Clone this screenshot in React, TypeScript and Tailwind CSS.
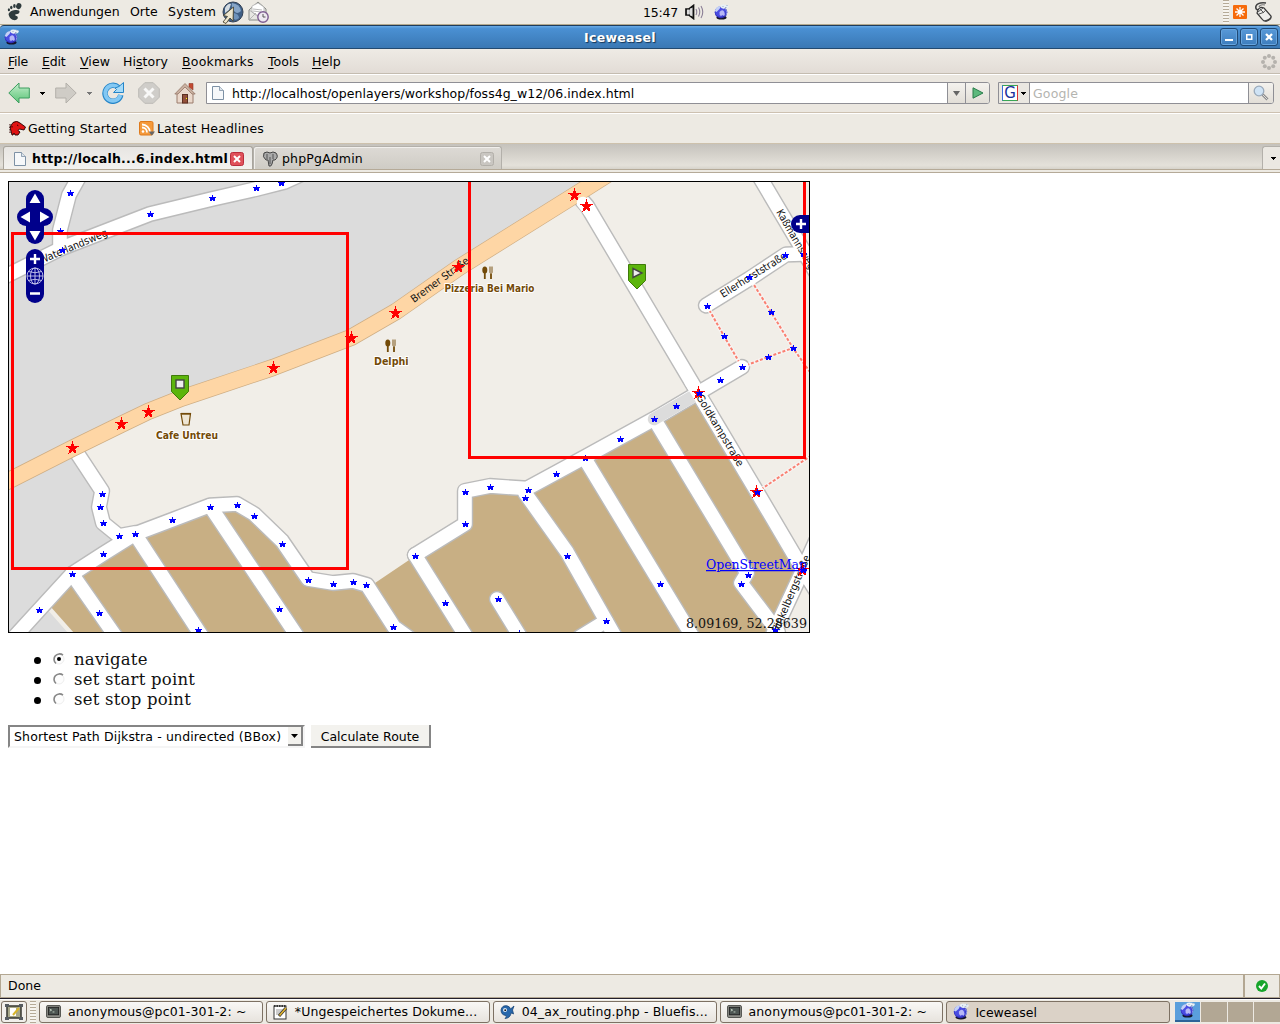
import React from "react";

type Pt = [number, number];

const SANS = "font-['DejaVu_Sans',sans-serif]";
const SERIF = "font-['DejaVu_Serif',serif]";

/* ---------- icons ---------- */

function Globe({ className }: { className: string }) {
  return (
    <svg viewBox="0 0 16 16" className={className}>
      <ellipse cx="7.500" cy="13.500" rx="5" ry="2" fill="#15152a" />
      <ellipse cx="7" cy="8.300" rx="6.300" ry="6" fill="#2f2db4" />
      <ellipse cx="6.500" cy="8" rx="5.300" ry="5" fill="#4a4ce2" />
      <path d="M.8 7Q2 2 7 2Q6 5.500 2.500 8Z" fill="#c4d1f7" />
      <path d="M5.500 8Q8 5 10 7.500Q11.500 11 10 12L8.500 11L7 12Q5 11 5.500 8Z" fill="#b7b8f6" />
      <path d="M11.500 5Q14 8 12 11.500" fill="none" stroke="#9aa8f2" strokeWidth=".8" />
      <path d="M6 2Q8 0 11 .800Q15 .500 14.800 3Q13.500 5 10.500 4.500Q7.500 5.500 6 2Z" fill="#e8f0f6" />
      <path d="M8.500 2.500h1M12.500 1.500h1M11 3.500h1.500" stroke="#9aabc8" />
    </svg>
  );
}

function Foot() {
  return (
    <svg viewBox="0 0 16 18" className="h-[18px] w-4" fill="#2e3a3c">
      <ellipse cx="11.800" cy="3.200" rx="2.600" ry="3" transform="rotate(20 12 3)" />
      <ellipse cx="7.400" cy="3" rx="1.300" ry="2" />
      <ellipse cx="4.300" cy="4.500" rx="1.200" ry="1.700" />
      <ellipse cx="1.900" cy="6.800" rx="1.100" ry="1.500" />
      <path d="M1.500 11Q3 7.500 8 7Q13 6.500 12.500 9.200Q12 11.500 8.500 11.300Q7.500 12.500 9 12.800Q11.500 13.500 10.500 15.800Q9 18 5.500 16.800Q2 15 1.500 11Z" />
    </svg>
  );
}

function BrowserLaunch() {
  return (
    <svg viewBox="0 0 22 23" className="h-[23px] w-[22px]">
      <circle cx="11" cy="11" r="10" fill="#3f5f85" stroke="#334155" />
      <path d="M10 2Q18 3 19 10Q15 14 12 10Q9 6 10 2Z" fill="#86a5c8" />
      <path d="M3 7Q6 2 9 3L7 9L3 12Z" fill="#d3dbe2" />
      <path d="M12 12Q17 13 17 17Q14 20 12 18Z" fill="#6f93bb" />
      <path d="M11.500 6L1.500 14.500L5.500 15.500L1 21L4 22.500L8 17L11 20Z" fill="#eee7cf" stroke="#4b4632" strokeWidth=".9" />
    </svg>
  );
}

function MailLaunch() {
  return (
    <svg viewBox="0 0 22 22" className="h-[22px] w-[22px]">
      <path d="M1 9L10 1L18 8V19H1Z" fill="#e7e7e3" stroke="#888a85" />
      <path d="M4 5L10 2L16 6V12L9 15L4 11Z" fill="#fff" stroke="#aaa" strokeWidth=".7" />
      <path d="M5 8l9 1M5 10l8 1M1 19L8 12M1 9L12 16" stroke="#aaa" strokeWidth=".8" fill="none" />
      <circle cx="15" cy="16" r="5.200" fill="#eee9f1" stroke="#7d5c91" strokeWidth="1.400" />
      <path d="M15 13v3h2.500" stroke="#555" fill="none" />
    </svg>
  );
}

function Speaker() {
  return (
    <svg viewBox="0 0 20 16" className="h-4 w-5">
      <path d="M1 5H4L8.500 1.500V14.500L4 11H1Z" fill="#bbb" stroke="#111" strokeWidth="1.700" />
      <path d="M3 5.500V10.500M6 4V12" stroke="#fff" />
      <path d="M11 5Q12.500 8 11 11M13.500 3.500Q16 8 13.500 12.500M16 2Q19.500 8 16 14" fill="none" stroke="#8b7f96" strokeWidth="1.100" />
    </svg>
  );
}

function Mouse() {
  return (
    <svg viewBox="0 0 18 20" className="h-5 w-[18px]">
      <path d="M12 1Q4 0 2 4Q1 8 5 8" fill="none" stroke="#444" strokeWidth="1.600" />
      <path d="M11 3Q6 2 5 5" fill="none" stroke="#777" strokeWidth="1.200" />
      <path d="M4 8Q6 4 10 6L17 14Q18 17 13 19Q10 20 8 17L3 11Z" fill="#ededeb" stroke="#3a3a3a" strokeWidth="1.200" />
      <path d="M4 10L9 6M6 7L10 11M5 12Q10 11 12 8" stroke="#555" fill="none" />
      <path d="M10 18.500Q16 17 17 14V16Q15 19.500 11 19.500Z" fill="#444" />
    </svg>
  );
}

function PageIcon() {
  return (
    <svg viewBox="0 0 12 14" className="h-3.5 w-3">
      <path d="M.5 .5H7.500L11.500 4.500V13.500H.500Z" fill="#f6f8fa" stroke="#7d91a5" />
      <path d="M7.500 .500V4.500H11.500" fill="#dde4ea" stroke="#7d91a5" strokeWidth=".8" />
    </svg>
  );
}

function Caret({ color }: { color: "dark" | "gray" }) {
  return (
    <svg viewBox="0 0 5 3" className="h-[3px] w-[5px]" shapeRendering="crispEdges">
      <path d="M0 0H5L2.500 3Z" fill={color === "dark" ? "#000" : "#777"} />
    </svg>
  );
}

function Terminal() {
  return (
    <svg viewBox="0 0 16 14" className="h-[13px] w-[15px]">
      <rect x=".5" y=".5" width="15" height="13" rx="1.500" fill="#8d8e88" stroke="#4a4b47" />
      <rect x="2.500" y="2.500" width="11" height="8" fill="#4d5552" stroke="#222" />
      <path d="M4 4.500l2 1-2 1M7 7.500h2" stroke="#cfe0cf" fill="none" strokeWidth=".9" />
    </svg>
  );
}

/* ---------- map ---------- */

const toPath = (pts: Pt[]) => "M" + pts.map((p) => p.join(" ")).join("L");

const ROADS: Pt[][] = [
  [[0, 279], [8, 275], [62, 248], [150, 214], [212, 199], [256, 189], [284, 182], [315, 168]],
  [[60, 248], [60, 230], [69, 195], [84, 168]],
  [[77, 453], [102, 491], [99, 507], [103, 523], [119, 536], [135, 533]],
  [[8, 644], [39, 610], [72, 574], [103, 554], [135, 534], [172, 520], [210, 505.500], [237, 504], [254, 514], [282, 541], [308, 579], [333, 583], [353, 581], [367, 585], [394, 627], [412, 640]],
  [[72, 574], [116, 637]],
  [[135, 534], [203, 638]],
  [[210, 506], [279, 609], [299, 639]],
  [[415, 555], [467, 638]],
  [[415, 555], [465, 524], [465, 491], [490, 486], [527, 488.500], [585, 457], [654, 419], [698, 393], [742, 367]],
  [[525, 493], [567, 552], [617, 640]],
  [[606, 621], [580, 637]],
  [[585, 459], [694, 639]],
  [[656, 422], [747, 573], [741, 583], [778, 632]],
  [[497, 599], [521, 638]],
  [[580, 198], [587, 206], [698, 393], [757, 492], [803, 570], [818, 594]],
  [[768, 645], [801, 574], [816, 541]],
  [[755, 169], [803, 250], [818, 276]],
  [[706, 305.500], [749, 279], [786, 254.500], [815, 253.500]],
];

const HIGHWAY: Pt[] = [[0, 485], [8, 481], [72, 448.500], [121, 424.500], [148, 411.500], [182, 398], [273, 367.500], [351, 337.500], [396, 311.500], [459, 267.500], [575, 195], [620, 166.500]];

const PATHS: Pt[][] = [
  [[707, 306], [724, 336], [742, 367]],
  [[749, 277], [771, 312], [793, 348], [812, 375]],
  [[742, 367], [768, 357], [793, 348]],
  [[757, 492], [812, 455]],
];

const BLUE: Pt[] = [
  [70, 193], [60, 231], [62, 250], [150, 214], [212, 198], [256, 188], [281, 183],
  [102, 494], [100, 507], [103, 523], [119, 536], [135, 534], [103, 554], [72, 574], [39, 610], [99, 613], [198, 630],
  [172, 520], [210, 507], [237, 505], [254, 516], [282, 544], [279, 609], [308, 580], [333, 584], [353, 582], [366, 585], [393, 627],
  [415, 556], [445, 603], [465, 524], [465, 492], [490, 487], [528, 490], [525, 498], [498, 599], [519, 633],
  [556, 474], [585, 458], [620, 439], [654, 419], [676, 406], [720, 380], [742, 367],
  [567, 556], [606, 621], [660, 584], [748, 575], [741, 584], [775, 630],
  [707, 306], [724, 336], [749, 277], [785, 255], [803, 254], [771, 312], [793, 348], [768, 357],
];

const RED: Pt[] = [
  [72, 448], [121, 424], [148, 412], [273, 368], [351, 338], [395, 313], [458, 267], [574, 195], [586, 206], [698, 393], [756, 492], [802, 570],
];

const JUNCTIONS: Pt[] = [[699, 393], [757, 492], [803, 570]];

const SMALL_STAR = "M0 -3H1V-1H4V0H3V3H1V2H0V3H-2V0H-3V-1H0Z";

function starPath(cx: number, cy: number, r: number) {
  const pts: Pt[] = [];
  for (let i = 0; i < 10; i++) {
    const a = -Math.PI / 2 + (i * Math.PI) / 5;
    const d = i % 2 ? r * 0.42 : r;
    pts.push([+(cx + d * Math.cos(a)).toFixed(2), +(cy + d * Math.sin(a)).toFixed(2)]);
  }
  return toPath(pts) + "Z";
}

function Fork({ x, y }: { x: number; y: number }) {
  return (
    <g transform={`translate(${x} ${y})`}>
      <ellipse cx="2.800" cy="3.500" rx="2.500" ry="3.500" fill="#734a08" />
      <path d="M2.800 5V12.500M9 5V12.500" stroke="#734a08" strokeWidth="1.800" />
      <path d="M7 0H11V6L9 7.500L7 6Z" fill="#b5a07e" />
    </g>
  );
}

function PlaceLabel({ x, y, w, children }: { x: number; y: number; w: number; children: string }) {
  return (
    <text x={x} y={y} textLength={w} lengthAdjust="spacingAndGlyphs" fontSize="9.800" fontWeight="bold" fill="#734a08" stroke="#fff" strokeWidth="2" strokeLinejoin="round" paintOrder="stroke">
      {children}
    </text>
  );
}

function StreetLabel({ x, y, a, w, children }: { x: number; y: number; a: number; w: number; children: string }) {
  return (
    <text transform={`translate(${x} ${y}) rotate(${a})`} textLength={w} lengthAdjust="spacingAndGlyphs" fontSize="10.500" fill="#111">
      {children}
    </text>
  );
}

function Pin({ x, y, children }: { x: number; y: number; children: React.ReactNode }) {
  return (
    <g transform={`translate(${x} ${y})`}>
      <path d="M-8.500 .500H8.500V16.500L0 25L-8.500 16.500Z" fill="#5cb50c" stroke="#3f7a0a" />
      {children}
    </g>
  );
}

function MapView() {
  return (
    <svg viewBox="8 181 802 452" className={`block h-[452px] w-[802px] ${SANS}`}>
      <rect x="8" y="181" width="802" height="452" fill="#f1eee8" />
      <path d={toPath([[0, 181], ...HIGHWAY.slice().reverse(), [0, 485]])} fill="#dcdcdc" />
      <path d="M8 481L72 448L102 492L99 507L103 523L119 536L72 574L46 608L68 633H8Z" fill="#dcdcdc" />
      <path d="M50 606L72 574L103 554L135 534L210 506L237 505L254 516L282 544L308 580L366 585L375 583L415 556L465 524V491L490 486L527 489L698 393L803 570L773 633H74Z" fill="#c8af84" />
      <g fill="none" strokeLinejoin="round" strokeLinecap="round">
        {ROADS.map((r, i) => <path key={i} d={toPath(r)} stroke="#bbb" strokeWidth="16.400" />)}
        {PATHS.map((r, i) => <path key={i} d={toPath(r)} stroke="#f7f4f2" strokeWidth="4" />)}
        {PATHS.map((r, i) => <path key={i} d={toPath(r)} stroke="#fa8072" strokeWidth="2" strokeLinecap="butt" strokeDasharray="3 1.800" />)}
        {ROADS.map((r, i) => <path key={i} d={toPath(r)} stroke="#fff" strokeWidth="13.600" />)}
        <path d="M654 419L692 397" stroke="#dcdcdc" strokeWidth="12.500" />
        <path d="M690 380L698 393L712 416" stroke="#fff" strokeWidth="13" strokeLinecap="butt" />
        <path d={toPath(HIGHWAY)} stroke="#cfae84" strokeWidth="17.200" />
        <path d={toPath(HIGHWAY)} stroke="#fed6a5" strokeWidth="15.800" />
        <path d="M583 203L590 212" stroke="#fff" strokeWidth="12.500" />
      </g>
      <StreetLabel x={41} y={264} a={-23} w={73}>Waterlandsweg</StreetLabel>
      <StreetLabel x={414} y={303} a={-36} w={69}>Bremer Straße</StreetLabel>
      <StreetLabel x={723} y={298} a={-32} w={76}>Ellerhorststraße</StreetLabel>
      <StreetLabel x={776} y={212} a={60} w={67}>Kaßmannsweg</StreetLabel>
      <StreetLabel x={696} y={397} a={59} w={82}>Goldkampstraße</StreetLabel>
      <StreetLabel x={777} y={636} a={-67} w={86}>Winkelbergstraße</StreetLabel>
      <Fork x={482} y={266.500} />
      <Fork x={385} y={339.500} />
      <path d="M181 413.500H190.500L189 425H183Z" fill="#efe6d4" stroke="#734a08" strokeWidth="1.200" />
      <path d="M181 413.800H191" stroke="#734a08" strokeWidth="1.800" />
      <PlaceLabel x={444.500} y={292} w={90}>Pizzeria Bei Mario</PlaceLabel>
      <PlaceLabel x={374} y={365} w={34.500}>Delphi</PlaceLabel>
      <PlaceLabel x={156} y={438.500} w={62}>Cafe Untreu</PlaceLabel>
      <Pin x={180} y={375}>
        <rect x="-4" y="5" width="8" height="8" fill="#eee" stroke="#444" strokeWidth="1.400" />
      </Pin>
      <Pin x={637} y={264}>
        <path d="M-4 4.500L5 9L-4 13.500Z" fill="#eee" stroke="#444" strokeWidth="1.400" />
      </Pin>
      <g fill="#f00" shapeRendering="crispEdges">
        {RED.map(([x, y], i) => <path key={i} d={starPath(x + 0.5, y + 0.3, 7)} />)}
      </g>
      <g fill="#00f" shapeRendering="crispEdges">
        {BLUE.concat(JUNCTIONS).map(([x, y], i) => <path key={i} transform={`translate(${x} ${y})`} d={SMALL_STAR} />)}
      </g>
      <g fill="none" stroke="#f00" strokeWidth="3">
        <rect x="12.500" y="233.500" width="335" height="335" />
        <rect x="469.500" y="122.500" width="335" height="335" />
      </g>
      <g fill="#00008b">
        <rect x="26" y="190" width="18" height="54" rx="9" />
        <rect x="17" y="208" width="36" height="18" rx="9" />
        <rect x="26" y="249" width="18" height="54" rx="9" />
        <path d="M810 215H800A9 9 0 0 0 800 233H810Z" />
      </g>
      <path d="M35 193.500L40.500 203H29.500ZM35 240.500L40.500 231H29.500ZM20.500 217L30 211.500V222.500ZM49.500 217L40 211.500V222.500Z" fill="#fff" />
      <path d="M30 259H40M35 254V264M30 293.500H40M796 224H806M801 219V229" stroke="#fff" strokeWidth="2.400" />
      <g fill="none" stroke="#c9c9ee" strokeWidth=".9">
        <circle cx="35" cy="276" r="8" />
        <ellipse cx="35" cy="276" rx="4.500" ry="8" />
        <path d="M35 268V284M27 276H43M28.500 271.500Q35 274 41.500 271.500M28.500 280.500Q35 278 41.500 280.500" />
      </g>
      <g className={SERIF} fontSize="12.500">
        <text x="706" y="569" textLength="101" lengthAdjust="spacingAndGlyphs" fill="#00f" textDecoration="underline">OpenStreetMap</text>
        <text x="686" y="628" textLength="121" lengthAdjust="spacingAndGlyphs" fill="#111">8.09169, 52.28639</text>
      </g>
      <rect x="8.500" y="181.500" width="801" height="451" fill="none" stroke="#000" />
    </svg>
  );
}

/* ---------- chrome ---------- */

function Grip() {
  return <div className="h-full w-[6px] shrink-0 bg-[repeating-linear-gradient(180deg,#b5aa97_0_1px,#f6f4ef_1px_3px)]" />;
}

function TopPanel() {
  return (
    <div className="flex h-[25px] items-center border-b border-[#b3a98e] bg-[#edeae3]">
      <div className="ml-[7px] w-[23px]"><Foot /></div>
      <span className="w-[100px]">Anwendungen</span>
      <span className="w-[38px]">Orte</span>
      <span className="w-[54px] tracking-[0.250px]">System</span>
      <div className="w-[26px]"><BrowserLaunch /></div>
      <MailLaunch />
      <span className="ml-[373px] w-[42px] pt-px tracking-[-0.200px]">15:47</span>
      <Speaker />
      <Globe className="ml-[9px] h-4 w-4" />
      <div className="ml-auto h-full"><Grip /></div>
      <svg viewBox="0 0 14 14" className="ml-[4px] h-3.5 w-3.5">
        <rect width="14" height="14" rx="1" fill="#f66a0a" />
        <path d="M7 2V12M2 7H12M3.500 3.500L10.500 10.500M10.500 3.500L3.500 10.500" stroke="#fff" strokeWidth="1.300" />
        <circle cx="7" cy="7" r="2" fill="#fff" />
      </svg>
      <div className="mr-[8px] ml-[7px]"><Mouse /></div>
    </div>
  );
}

function WinButton({ children }: { children: React.ReactNode }) {
  return (
    <div className="flex h-[18px] w-[18px] items-center justify-center rounded-[3px] border border-[#1f4975] bg-[linear-gradient(#5899d8,#3d7dbd)] shadow-[inset_0_0_0_1px_#66a4de]">
      <svg viewBox="0 0 8 8" className="h-2 w-2" fill="none" stroke="#fff" strokeWidth="2">{children}</svg>
    </div>
  );
}

function TitleBar() {
  return (
    <div className="flex h-6 items-center rounded-t-[4px] border-t border-b border-t-[#1d3c5c] border-b-[#234a70] bg-[linear-gradient(#6aabe6,#4a90d3_12%,#3a78b4)]">
      <Globe className="ml-1 h-4 w-4" />
      <div className="ml-[564px] flex-1 pt-px text-[12.500px] font-bold tracking-[0.300px] text-white [text-shadow:1px_1px_1px_#163453]">Iceweasel</div>
      <div className="mr-[2px] flex gap-[2px]">
        <WinButton><path d="M0 7H8" /></WinButton>
        <WinButton><path d="M1.750 1.750H6.750V6.250H1.750Z" strokeWidth="1.500" /></WinButton>
        <WinButton><path d="M1 1L7 7M7 1L1 7" strokeWidth="2.300" /></WinButton>
      </div>
    </div>
  );
}

function MenuItem({ pre = "", k, rest, className }: { pre?: string; k: string; rest: string; className: string }) {
  return (
    <span className={`shrink-0 whitespace-nowrap ${className}`}>
      {pre}<span className="underline underline-offset-2">{k}</span>{rest}
    </span>
  );
}

function MenuBar() {
  return (
    <div className="flex h-[25px] items-center border-b border-[#c4bcb0] bg-[linear-gradient(#eeebe5,#e2dcd6)] pt-px pl-2 text-[12.500px] tracking-[0.060px]">
      <MenuItem k="F" rest="ile" className="w-[34px] tracking-[-0.250px]" />
      <MenuItem k="E" rest="dit" className="w-[38px] tracking-[-0.200px]" />
      <MenuItem k="V" rest="iew" className="w-[43px]" />
      <MenuItem pre="Hi" k="s" rest="tory" className="w-[59px]" />
      <MenuItem k="B" rest="ookmarks" className="w-[86px] tracking-[0.200px]" />
      <MenuItem k="T" rest="ools" className="w-[44px]" />
      <MenuItem k="H" rest="elp" className="w-[40px]" />
      <svg viewBox="0 0 16 16" className="mr-[3px] ml-auto h-4 w-4" fill="#b5b2ad">
        <circle cx="8" cy="2" r="2" /><circle cx="12.200" cy="3.800" r="2" /><circle cx="14" cy="8" r="2" /><circle cx="12.200" cy="12.200" r="2" />
        <circle cx="8" cy="14" r="2" /><circle cx="3.800" cy="12.200" r="2" /><circle cx="2" cy="8" r="2" /><circle cx="3.800" cy="3.800" r="2" />
      </svg>
    </div>
  );
}

function Toolbar() {
  return (
    <div className="flex h-[39px] items-center border-t border-b border-t-white border-b-[#cdc1b1] bg-[#ebe7e0] pb-px pl-2">
      <svg viewBox="0 0 22 22" className="h-[22px] w-[22px]">
        <defs><linearGradient id="back" x2="0" y2="1"><stop offset="0" stopColor="#c9efd2" /><stop offset=".5" stopColor="#8ed9a0" /><stop offset="1" stopColor="#5ec37a" /></linearGradient></defs>
        <path d="M.8 11L11 1V6H21.300V16H11V21Z" fill="url(#back)" stroke="#3c9e5f" />
      </svg>
      <div className="ml-[10px]"><Caret color="dark" /></div>
      <svg viewBox="0 0 22 22" className="ml-[10px] h-[22px] w-[22px]">
        <path d="M21.200 11L11 1V6H.700V16H11V21Z" fill="#cfccc6" stroke="#b3b0aa" />
      </svg>
      <div className="ml-[10px]"><Caret color="gray" /></div>
      <svg viewBox="0 0 22 22" className="ml-[10px] h-[22px] w-[22px]">
        <path d="M18.800 13A8 8 0 1 1 16.500 5.500" fill="none" stroke="#2585c8" strokeWidth="5.400" />
        <path d="M18.400 13A7.700 7.700 0 1 1 16.500 5.800" fill="none" stroke="#83c8f3" strokeWidth="3.800" />
        <path d="M21.500 .500V10.500H11.500L14.500 7.500L13 6L17 4.500Z" fill="#a5dbf9" stroke="#2585c8" />
      </svg>
      <svg viewBox="0 0 22 22" className="ml-[14px] h-[22px] w-[22px]">
        <path d="M6.800 .700H15.200L21.300 6.800V15.200L15.200 21.300H6.800L.700 15.200V6.800Z" fill="#cfcdc9" stroke="#bcbab6" />
        <path d="M6.500 6.500L15.500 15.500M15.500 6.500L6.500 15.500" stroke="#f8f8f7" strokeWidth="3" />
      </svg>
      <svg viewBox="0 0 22 22" className="ml-[14px] h-[22px] w-[22px]">
        <path d="M15 1.500H19V8L15 5Z" fill="#c34a32" stroke="#8d3b2a" strokeWidth=".6" />
        <path d="M3 11V21H19V11L11 3Z" fill="#ead8cb" stroke="#9b7d6c" />
        <path d="M.800 12L11 1.500L21.200 12H18L11 5L4 12Z" fill="#c9b0a0" stroke="#957767" strokeWidth=".8" />
        <rect x="8.500" y="12.500" width="5" height="8.500" fill="#93503a" stroke="#5c2e20" />
        <rect x="12" y="16" width="1" height="1" fill="#ff0" />
      </svg>
      <div className="ml-[10px] flex h-[22px] w-[784px] overflow-hidden rounded-r-[3px] border border-[#8f8f95] bg-white">
        <div className="flex w-[740px] items-center pl-[5px] text-[12.500px]">
          <PageIcon />
          <span className="ml-2 pt-[2px] tracking-[0.030px] whitespace-nowrap">http://localhost/openlayers/workshop/foss4g_w12/06.index.html</span>
        </div>
        <div className="flex w-[18px] items-center justify-center border-l border-[#8f8f95] bg-[linear-gradient(#f4f2ee,#e2ded7)]">
          <svg viewBox="0 0 7 5" className="h-[5px] w-[7px]"><path d="M0 0H7L3.500 5Z" fill="#666" /></svg>
        </div>
        <div className="flex flex-1 items-center justify-center border-l border-[#8f8f95] bg-[linear-gradient(#f4f2ee,#e2ded7)]">
          <svg viewBox="0 0 12 12" className="h-3 w-3"><path d="M1 .800L11 6L1 11.200Z" fill="#5db97d" stroke="#2a7d4b" /></svg>
        </div>
      </div>
      <div className="ml-[8px] flex h-[22px] w-[276px] overflow-hidden rounded-r-[3px] border border-[#8f8f95] bg-white">
        <div className="flex w-[30px] items-center bg-[#eae7e1] pl-[3px]">
          <div className="flex h-4 w-4 items-center justify-center border border-t-[#3aa655] border-r-[#d33] border-b-[#3aa655] border-l-[#3b6fe0] bg-white text-[15px] leading-none text-[#1a2f9c]">G</div>
          <div className="ml-[3px]"><Caret color="dark" /></div>
        </div>
        <div className="flex w-[219px] items-center border-l border-[#8f8f95] pt-px pl-[3px] text-[12.500px] tracking-[0.150px] text-[#b4b4b0]">Google</div>
        <div className="flex flex-1 items-center justify-center border-l border-[#8f8f95] bg-[linear-gradient(#f4f2ee,#e2ded7)]">
          <svg viewBox="0 0 16 16" className="h-4 w-4">
            <path d="M9.500 9.500L14.500 14.500" stroke="#8d8d8d" strokeWidth="2.800" />
            <path d="M9.500 9.500L14.500 14.500" stroke="#ddd" />
            <circle cx="6" cy="6" r="4.800" fill="#cfe3f5" stroke="#9aaabb" strokeWidth="1.300" />
          </svg>
        </div>
      </div>
    </div>
  );
}

function Bookmarks() {
  return (
    <div className="flex h-[31px] items-center border-t border-b border-t-white border-b-[#cdc1ac] bg-[#edeae3] pl-[9px] text-[12.500px] tracking-[0.160px]">
      <svg viewBox="0 0 17 15" className="h-[15px] w-[17px]">
        <path d="M4 1.500Q8 -1 11 2L16.500 6L15 9L10.500 8L9 9.500L11 11L9 14H6L5 12L4 14H3L2 10L1 6Z" fill="#e01212" stroke="#200" strokeWidth=".9" />
        <path d="M1 3v9M3 5v2M8 4l2 1" stroke="#300" strokeDasharray="1.500 1" />
      </svg>
      <span className="ml-[2px] w-[111px] whitespace-nowrap">Getting Started</span>
      <svg viewBox="0 0 17 15" className="h-[15px] w-[17px]">
        <rect x=".5" y=".5" width="13.500" height="13.500" rx="1.500" fill="#f49a3c" stroke="#de7a1c" />
        <path d="M3 3.500A8 8 0 0 1 11 11.500M3 6.500A5 5 0 0 1 8 11.500" fill="none" stroke="#fff" strokeWidth="1.800" />
        <circle cx="4" cy="10.500" r="1.300" fill="#fff" />
        <path d="M9.500 10.500H16L12.800 14.500Z" fill="#666" />
      </svg>
      <span className="ml-[1px] whitespace-nowrap">Latest Headlines</span>
    </div>
  );
}

function CloseX({ active }: { active: boolean }) {
  return (
    <svg viewBox="0 0 14 14" className="mt-px h-3.5 w-3.5 shrink-0">
      <rect x=".5" y=".5" width="13" height="13" rx="2" fill={active ? "#e0515a" : "#c9c6c1"} stroke={active ? "#b92d3c" : "#b2afa9"} />
      <path d="M4 4L10 10M10 4L4 10" stroke="#fff" strokeWidth="2" />
    </svg>
  );
}

function TabStrip() {
  return (
    <div className="flex h-[29px] flex-col">
      <div className="flex h-[26px] items-end border-b border-[#b5aa98] bg-[linear-gradient(#c5c2bc,#e4e1da_85%,#d6d3cb)]">
        <div className="ml-[3px] flex h-[23px] w-[250px] items-center rounded-t-[3px] border border-b-0 border-[#a9a59d] bg-[linear-gradient(#e7e5e2,#f3f2ef)] pl-[10px]">
          <div className="pt-px"><PageIcon /></div>
          <span className="ml-[6px] w-[198px] pt-[2px] text-[12.500px] font-bold tracking-[0.250px] whitespace-nowrap">http://localh...6.index.html</span>
          <CloseX active />
        </div>
        <div className="flex h-[23px] w-[249px] items-center rounded-t-[3px] border border-b-0 border-[#b3b0aa] bg-[linear-gradient(#dddad5,#cfccc5)] pl-2 shadow-[inset_1px_1px_0_#f1efec]">
          <svg viewBox="0 0 16 16" className="mt-px h-4 w-4">
            <path d="M2 2Q5 0 8 2Q11 0 14 2Q17 6 13 9H11L10 13Q9 16 7 15L6 9H4Q0 6 2 2Z" fill="#aaa" stroke="#444" />
            <path d="M5 3V8M11 3V8M8 6V13" stroke="#555" />
          </svg>
          <span className="ml-1 w-[198px] pt-[2px] text-[12.500px] tracking-[0.180px]">phpPgAdmin</span>
          <CloseX active={false} />
        </div>
        <div className="ml-auto flex h-[23px] w-[18px] items-center justify-center rounded-tl-[3px] border border-r-0 border-b-0 border-[#b3b0aa] bg-[#ebe8e2] pt-px pl-1"><Caret color="dark" /></div>
      </div>
      <div className="h-[3px] border-b border-[#b5aa98] bg-[#edeae3]" />
    </div>
  );
}

function Radio({ label, checked }: { label: string; checked?: boolean }) {
  return (
    <li className="flex h-5 items-center">
      <span className="mt-px h-[7px] w-[7px] rounded-full bg-black" />
      <svg viewBox="0 0 12 12" className="mt-[-3px] ml-[12px] h-3 w-3">
        <circle cx="6" cy="6" r="5" fill="#fdfdfd" stroke="#eee" />
        <path d="M3 10.500A5.200 5.200 0 0 1 10 2.200" fill="none" stroke="#888" strokeWidth="1.600" />
        {checked && <circle cx="6" cy="6" r="2" fill="#000" />}
      </svg>
      <span className="ml-[9px]">{label}</span>
    </li>
  );
}

function Page() {
  return (
    <div className="flex-1 bg-white pt-2 pl-2">
      <MapView />
      <ul className={`mt-[17px] ml-[26px] text-[16.500px] tracking-[0.220px] text-[#111] ${SERIF}`}>
        <Radio label="navigate" checked />
        <Radio label="set start point" />
        <Radio label="set stop point" />
      </ul>
      <div className="mt-[15px] flex text-[12.500px]">
        <div className="flex h-[23px] w-[297px] items-center border-2 border-t-[#858585] border-r-[#f5f5f5] border-b-[#f5f5f5] border-l-[#858585] pl-1">
          <span className="flex-1 tracking-[0.140px] whitespace-nowrap">Shortest Path Dijkstra - undirected (BBox)</span>
          <div className="flex h-[19px] w-[15px] items-center justify-center border-r-2 border-b-2 border-[#858585] bg-[#f3f2ee]">
            <svg viewBox="0 0 7 4" className="h-1 w-[7px]"><path d="M0 0H7L3.500 4Z" /></svg>
          </div>
        </div>
        <div className="ml-[6px] flex h-[23px] w-[120px] items-center justify-center border-r-2 border-b-2 border-[#858585] bg-[#f3f2ee] pt-[2px] whitespace-nowrap">Calculate Route</div>
      </div>
    </div>
  );
}

function StatusBar() {
  return (
    <div className="flex h-6 border border-[#b3a792] bg-[#edeae3] text-[12.500px]">
      <div className="flex w-[1244px] items-center border-r-2 border-[#b3a792] pl-[7px]">Done</div>
      <div className="flex flex-1 items-center justify-center">
        <svg viewBox="0 0 12 12" className="h-3 w-3"><circle cx="6" cy="6" r="6" fill="#16a52a" /><path d="M3 6L5.300 8.500L9 3.500" fill="none" stroke="#fff" strokeWidth="1.900" /></svg>
      </div>
    </div>
  );
}

function Task({ icon, label, active }: { icon: React.ReactNode; label: string; active?: boolean }) {
  return (
    <div className={`mr-[3px] flex h-[22px] w-[223.850px] shrink-0 items-center rounded-[3px] border border-[#7d7163] pl-[6px] ${active ? "bg-[#dbd2c7]" : "bg-[linear-gradient(#f9f8f6,#e7e3dd)]"}`}>
      <div className="w-[22px]">{icon}</div>
      <span className={`text-[12.500px] whitespace-nowrap ${active ? "pt-[2px]" : "tracking-[0.130px]"}`}>{label}</span>
    </div>
  );
}

function TaskBar() {
  return (
    <div className="flex h-[26px] items-center border-t border-[#221f2b] bg-[#edeae3] pl-[1px] shadow-[inset_0_1px_0_#fff]">
      <div className="flex h-[22px] w-[26px] items-center justify-center rounded-[3px] border border-[#7d7163] bg-[#f1efeb]">
        <svg viewBox="0 0 18 16" className="h-4 w-[18px]">
          <rect x="2" y="2" width="14" height="12" fill="#a8a88a" stroke="#33342f" strokeWidth="1.500" />
          <path d="M0 0h4v3H0ZM14 0h4v3h-4ZM0 13h4v3H0ZM14 13h4v3h-4Z" fill="#555b60" />
          <path d="M5 4H11V12H5Z" fill="#fff" />
          <path d="M8 11L14 4" stroke="#d8b52b" strokeWidth="2" />
        </svg>
      </div>
      <div className="mr-[3px] ml-[3px] h-[22px]"><Grip /></div>
      <Task icon={<Terminal />} label="anonymous@pc01-301-2: ~" />
      <Task
        icon={
          <svg viewBox="0 0 15 16" className="h-4 w-[15px]">
            <rect x="1" y="2" width="12" height="13" fill="#fff" stroke="#333" />
            <path d="M1 2H13" stroke="#333" strokeWidth="2" strokeDasharray="1.500 1" />
            <path d="M3 6h7M3 8h6M3 10h4" stroke="#999" />
            <path d="M6 12L13 4" stroke="#333" strokeWidth="3" /><path d="M6.500 11.500L13 4" stroke="#e2b52e" strokeWidth="1.600" />
          </svg>
        }
        label="*Ungespeichertes Dokume..."
      />
      <Task
        icon={
          <svg viewBox="0 0 15 14" className="h-3.5 w-[15px]">
            <path d="M1 5Q2 0 7 .800Q10 1.500 10.500 4L14 1L12.500 5L13.500 9Q12 8 11 8Q10.500 13 5 13.500Q7 12 6 10.500Q1 10 1 5Z" fill="#2767ab" stroke="#184578" strokeWidth=".8" />
            <circle cx="5" cy="5" r="2" fill="#dce8f4" /><circle cx="5.200" cy="5.200" r=".9" fill="#111" />
          </svg>
        }
        label="04_ax_routing.php - Bluefis..."
      />
      <Task icon={<Terminal />} label="anonymous@pc01-301-2: ~" />
      <Task active icon={<Globe className="h-[17px] w-[17px]" />} label="Iceweasel" />
      <div className="ml-[2px] flex h-[20px] flex-1 gap-[1px]">
        <div className="flex w-[25px] justify-center border-b-2 border-[#2c6399] bg-[#5a9fdc]"><Globe className="h-4 w-4" /></div>
        <div className="flex-1 bg-[#b2a794]" />
        <div className="flex-1 bg-[#b2a794]" />
        <div className="flex-1 bg-[#b2a794]" />
      </div>
    </div>
  );
}

export default function App() {
  return (
    <div className={`flex h-[1024px] w-[1280px] flex-col overflow-hidden bg-[#edeae3] text-[12.500px] leading-4 text-black ${SANS}`}>
      <TopPanel />
      <TitleBar />
      <MenuBar />
      <Toolbar />
      <Bookmarks />
      <TabStrip />
      <Page />
      <StatusBar />
      <TaskBar />
    </div>
  );
}
